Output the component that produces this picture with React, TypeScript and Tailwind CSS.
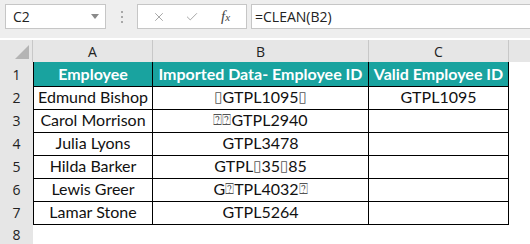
import { X, Check } from "lucide-react";

const grid = "grid grid-cols-[33px_120px_216px_140px_1fr]";
const cellFont = "font-['Lato','Liberation_Sans',sans-serif] text-[16px]";

const rows: [string, string, string][] = [
  ["Edmund Bishop", "\u25AFGTPL1095\u25AF", "GTPL1095"],
  ["Carol Morrison", "\u2370\u2370GTPL2940", ""],
  ["Julia Lyons", "GTPL3478", ""],
  ["Hilda Barker", "GTPL\u25AF35\u25AF85", ""],
  ["Lewis Greer", "G\u2370TPL4032\u2370", ""],
  ["Lamar Stone", "GTPL5264", ""],
];

function Weird({ text }: { text: string }) {
  // split odd glyphs out so they render in a font that has them
  const parts = text.split(/([\u25AF\u2370])/);
  return (
    <>
      {parts.map((p, i) =>
        p === "\u25AF" || p === "\u2370" ? (
          <span key={i} className="font-['DejaVu_Sans',sans-serif] text-[15px] text-[#555]">
            {p}
          </span>
        ) : (
          <span key={i}>{p}</span>
        )
      )}
    </>
  );
}

export default function App() {
  return (
    <div className="h-[244px] w-[530px] overflow-hidden bg-white">
      {/* formula bar */}
      <div className="flex h-[38px] items-start bg-[#eeeeee] pt-[4px] font-['Open_Sans',sans-serif] text-[14px] text-[#222]">
        <div className="ml-[5px] flex h-[25px] w-[101px] items-center justify-between border border-[#c6c6c6] bg-white pl-[7px] pr-[6px]">
          <span>C2</span>
          <span className="h-0 w-0 border-x-[4px] border-t-[5px] border-x-transparent border-t-[#8a8a8a]" />
        </div>
        <div className="ml-[15px] mr-[14px] flex h-[25px] flex-col items-center justify-center gap-[3px]">
          <span className="h-[2px] w-[2px] bg-[#a8a8a8]" />
          <span className="h-[2px] w-[2px] bg-[#a8a8a8]" />
          <span className="h-[2px] w-[2px] bg-[#a8a8a8]" />
        </div>
        <div className="flex h-[25px] w-[110px] items-center border border-[#c6c6c6] bg-white">
          <X className="ml-[14px] h-[14px] w-[14px] text-[#a0a0a0]" strokeWidth={1.6} />
          <Check className="ml-[19px] h-[14px] w-[14px] text-[#a0a0a0]" strokeWidth={1.6} />
          <span className="ml-[22px] font-['Liberation_Serif',serif] text-[15px] italic text-[#444]">
            f<span className="text-[11px]">x</span>
          </span>
        </div>
        <div className="ml-[4px] flex h-[25px] flex-1 items-center border border-r-0 border-[#c6c6c6] bg-white pl-[3px]">
          =CLEAN(B2)
        </div>
      </div>

      {/* column headers */}
      <div className={`${grid} mt-[2px] h-[22px] bg-[#e6e6e6] font-['Open_Sans',sans-serif] text-[14px] text-[#222]`}>
        <div className="flex items-end justify-end border-r border-[#c8c8c8] pb-[3px] pr-[3px]">
          <svg width="14" height="14" viewBox="0 0 14 14">
            <path d="M14 0 L14 14 L0 14 Z" fill="#b4b4b4" />
          </svg>
        </div>
        {["A", "B", "C"].map((c) => (
          <div key={c} className="flex items-center justify-center border-r border-[#c8c8c8]">
            {c}
          </div>
        ))}
        <div />
      </div>

      {/* header row */}
      <div className={`${grid} h-[23px]`}>
        <div className="flex items-center justify-center border-b border-[#d0d0d0] bg-[#e6e6e6] font-['Open_Sans',sans-serif] text-[14px] text-[#222]">
          1
        </div>
        {["Employee", "Imported Data- Employee ID", "Valid Employee ID"].map((h, i) => (
          <div
            key={h}
            className={`flex items-center justify-center border-b border-r border-black bg-[#19a39f] font-bold text-white ${cellFont} ${i === 0 ? "border-l" : ""}`}
          >
            {h}
          </div>
        ))}
        <div />
      </div>

      {rows.map(([name, raw, valid], i) => (
        <div key={name} className={`${grid} h-[23px]`}>
          <div className="flex items-center justify-center border-b border-[#d0d0d0] bg-[#e6e6e6] font-['Open_Sans',sans-serif] text-[14px] text-[#222]">
            {i + 2}
          </div>
          <div className={`flex items-center justify-center border-b border-l border-r border-black text-[#111] ${cellFont}`}>
            {name}
          </div>
          <div className={`flex items-center justify-center whitespace-pre border-b border-r border-black text-[#111] ${cellFont}`}>
            <Weird text={raw} />
          </div>
          <div className={`flex items-center justify-center border-b border-r border-black text-[#111] ${cellFont}`}>
            {valid}
          </div>
          <div />
        </div>
      ))}

      <div className={`${grid} h-[23px]`}>
        <div className="flex items-center justify-center bg-[#e6e6e6] font-['Open_Sans',sans-serif] text-[14px] text-[#222]">
          8
        </div>
      </div>
    </div>
  );
}
